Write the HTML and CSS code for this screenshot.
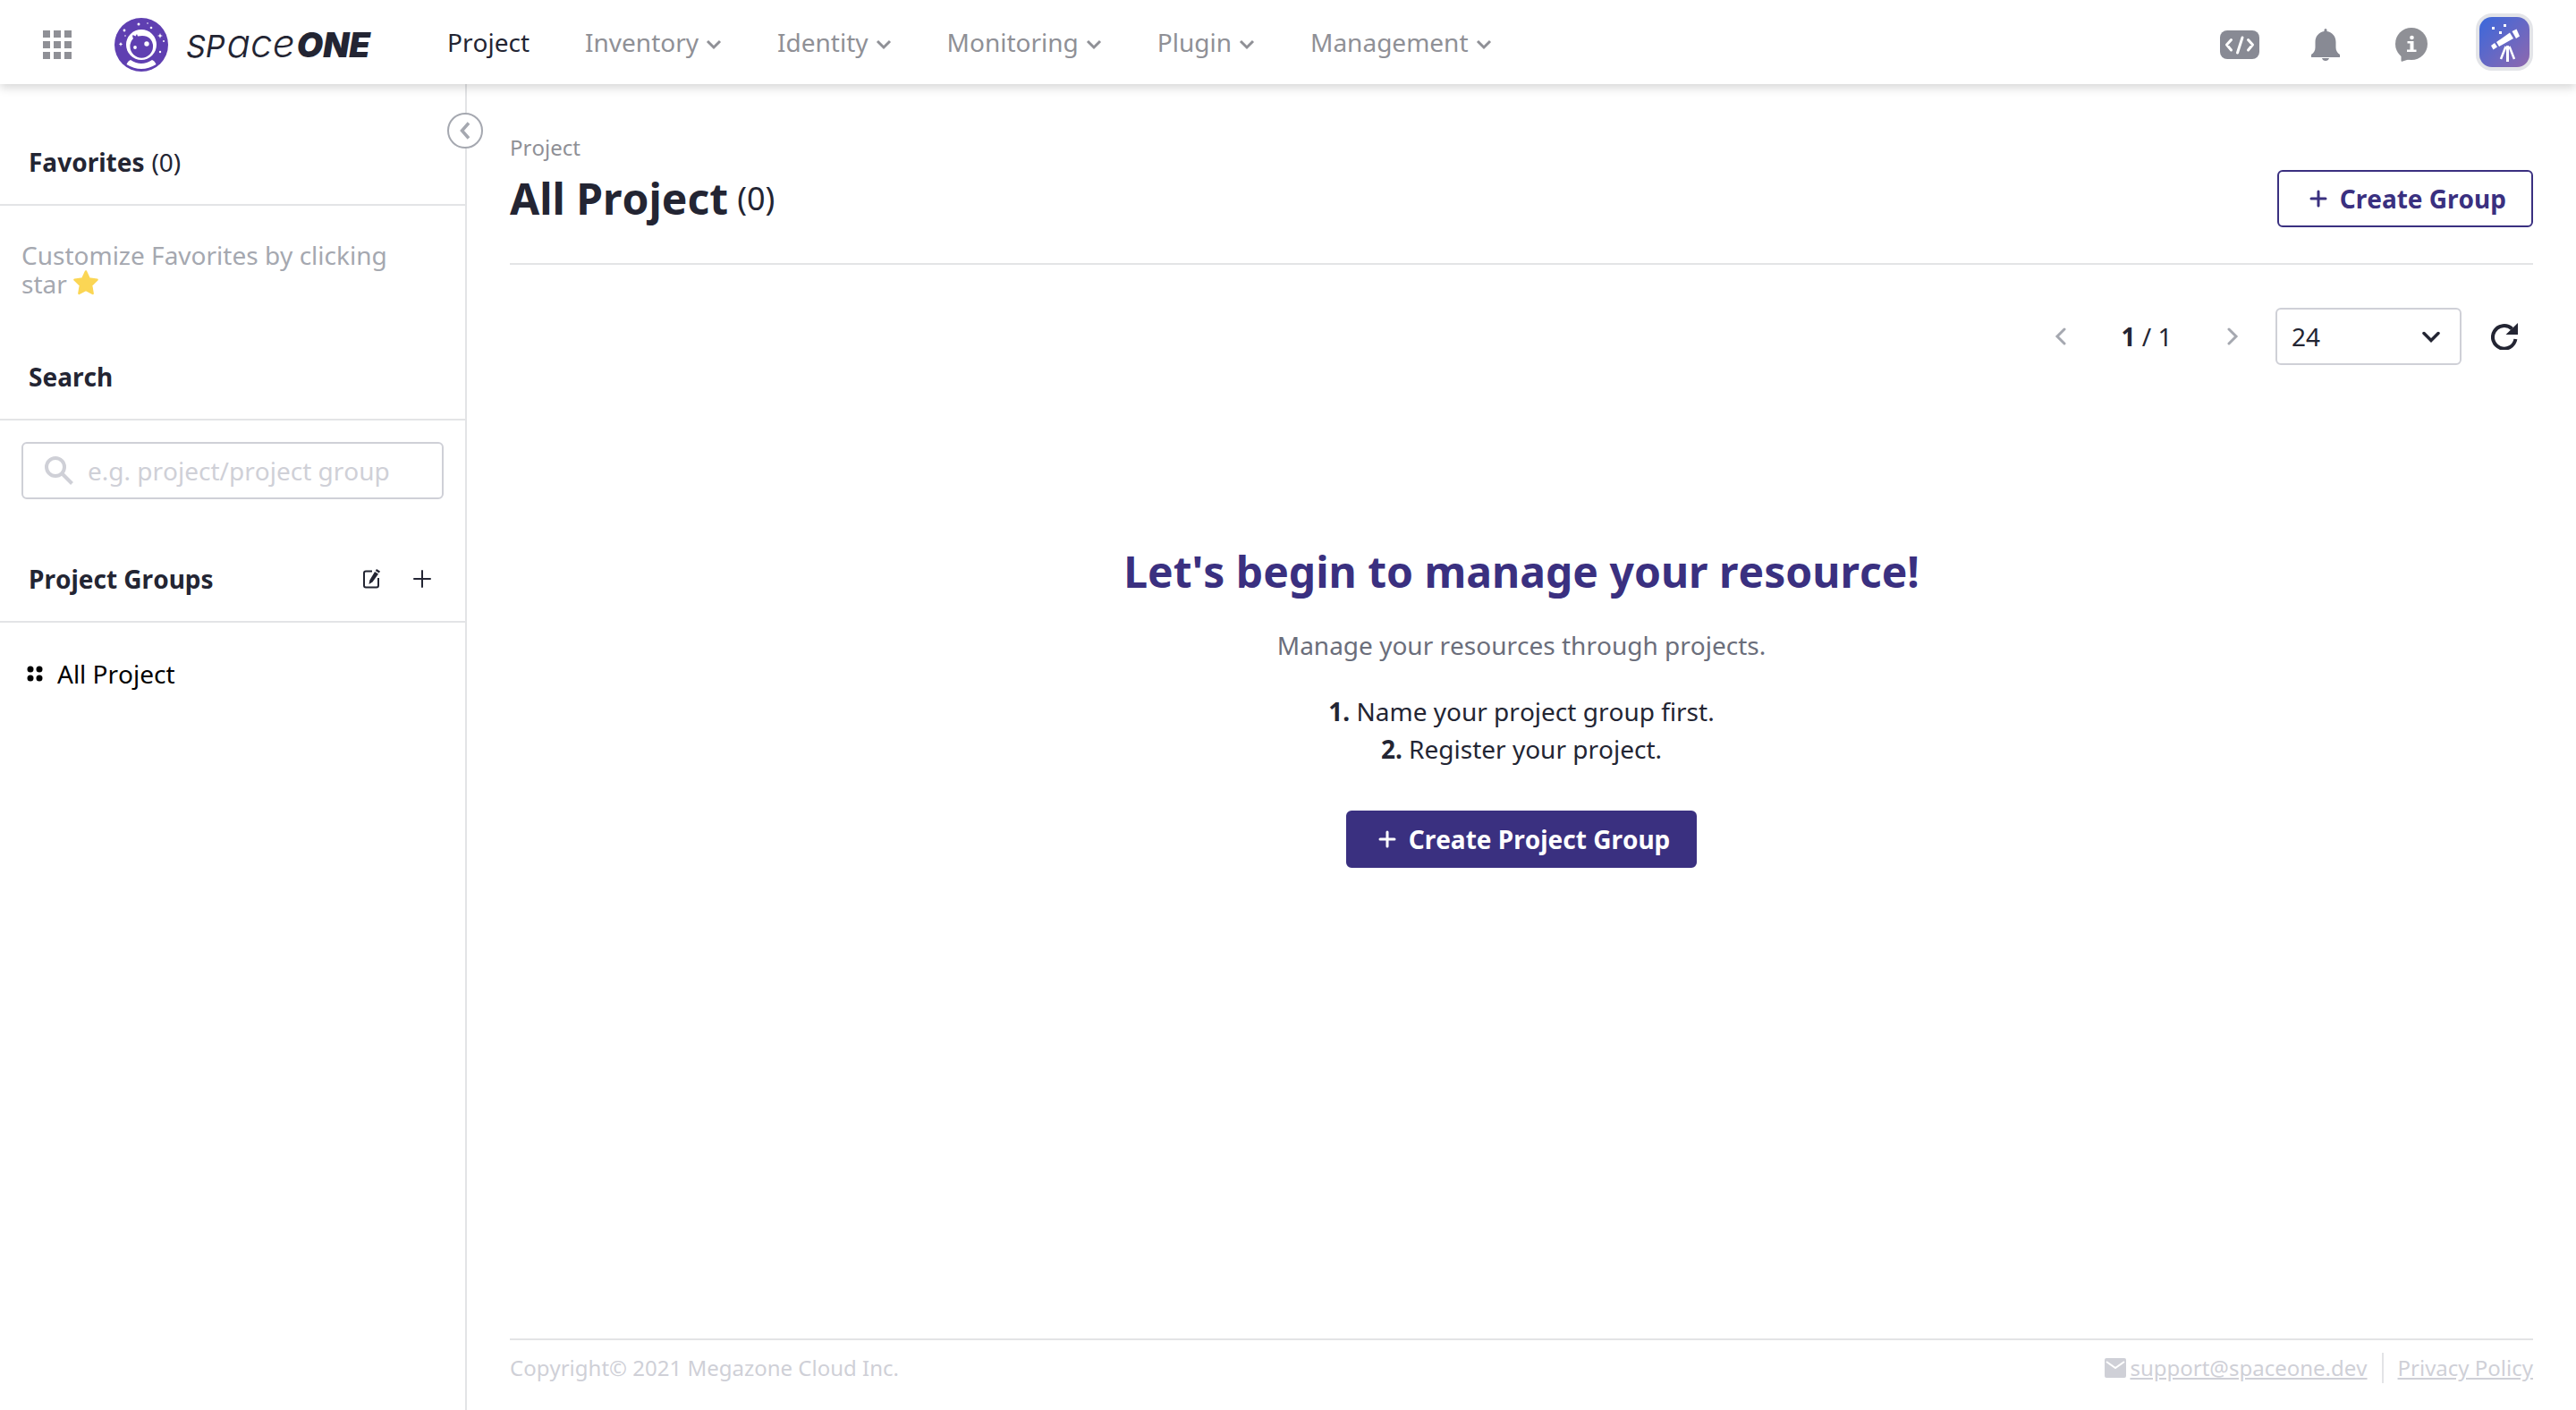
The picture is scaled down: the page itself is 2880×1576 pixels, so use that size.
FILE: index.html
```html
<!DOCTYPE html>
<html lang="en">
<head>
<meta charset="utf-8">
<meta name="viewport" content="width=device-width, initial-scale=1">
<title>Project - SpaceONE</title>
<link rel="stylesheet" href="styles.css">
</head>
<body>
<header class="topbar">
  <button class="icon-btn apps" type="button" aria-label="All services">
    <svg width="32" height="32" viewBox="0 0 32 32" fill="#8f9096"><path d="M0 0h8v8H0zM12 0h8v8h-8zM24 0h8v8h-8zM0 12h8v8H0zM12 12h8v8h-8zM24 12h8v8h-8zM0 24h8v8H0zM12 24h8v8h-8zM24 24h8v8h-8z"/></svg>
  </button>
  <a class="brand" href="#" aria-label="SpaceONE home">
    <svg width="60" height="60" viewBox="0 0 60 60">
      <circle cx="30" cy="30" r="30" fill="#5f3fb1"/>
      <circle cx="30" cy="30" r="17" fill="#fff"/>
      <path d="M21 23q-1.500-2-.5-4l3 1.500L25 18l1 2.500q9-2 13.500 2.500A12.800 12.800 0 1121 23z" fill="#5f3fb1"/>
      <path d="M18 47q12 8 24 0 3 1 4.500 5Q30 62 13.500 52q1.500-4 4.500-5z" fill="#fff"/>
      <g fill="#fff"><circle cx="36" cy="29" r="2.700"/><circle cx="23" cy="33" r="1.900"/><circle cx="27" cy="7" r="1.500"/><circle cx="41" cy="11" r="1.300"/><circle cx="11" cy="14" r="1.400"/><circle cx="37" cy="6" r=".8"/><circle cx="12" cy="20" r=".8"/><circle cx="51" cy="38" r="1.200"/><circle cx="55" cy="26" r="1"/><path d="M51 17l.8 2.200L54 20l-2.200.8L51 23l-.8-2.200L48 20l2.200-.8zM7 27l.7 1.600 1.600.7-1.600.7L7 32l-.7-2-1.600-.7 1.600-.7z"/></g>
    </svg>
    <span class="wordmark"><span class="wm-caps">SP</span><span class="wm-low">ace</span><b class="wm-one">ONE</b></span>
  </a>
  <nav class="menu" aria-label="Main">
    <a class="menu-item current" href="#">Project</a>
    <a class="menu-item" href="#">Inventory<svg class="caret" viewBox="0 0 18 12"><path d="M2 2l7 7 7-7"/></svg></a>
    <a class="menu-item" href="#">Identity<svg class="caret" viewBox="0 0 18 12"><path d="M2 2l7 7 7-7"/></svg></a>
    <a class="menu-item" href="#">Monitoring<svg class="caret" viewBox="0 0 18 12"><path d="M2 2l7 7 7-7"/></svg></a>
    <a class="menu-item" href="#">Plugin<svg class="caret" viewBox="0 0 18 12"><path d="M2 2l7 7 7-7"/></svg></a>
    <a class="menu-item" href="#">Management<svg class="caret" viewBox="0 0 18 12"><path d="M2 2l7 7 7-7"/></svg></a>
  </nav>
  <div class="tools">
    <button class="icon-btn tool" type="button" aria-label="Cloud shell">
      <svg width="44" height="32" viewBox="0 0 44 32"><rect width="44" height="32" rx="8" fill="#888a94"/><path d="M12.500 10.500L7.500 16l5 6M31.500 10.500l5 5.500-5 6M25 8l-5.500 17" fill="none" stroke="#fff" stroke-width="3" stroke-linecap="round" stroke-linejoin="round"/></svg>
    </button>
    <button class="icon-btn tool" type="button" aria-label="Notifications">
      <svg width="32" height="36" viewBox="0 0 32 36" fill="#888a94"><path d="M14.500 1.500a1.500 1.500 0 013 0V3C24 4 27.500 9 27.500 15v6c0 3.500 1.500 6 4.500 8v3H0v-3c3-2 4.500-4.500 4.500-8v-6c0-6 3.500-11 10-12zM12 33h8c-.5 2-2 3-4 3s-3.500-1-4-3z"/></svg>
    </button>
    <button class="icon-btn tool" type="button" aria-label="Information">
      <svg width="36" height="38" viewBox="0 0 36 38"><circle cx="18" cy="18" r="18" fill="#8f9096"/><path d="M6.500 30v7q0 1 1 .8L16 35z" fill="#8f9096"/><circle cx="18.500" cy="11" r="2.300" fill="#fff"/><path d="M13.500 15h7v9.500h3V27H13v-2.500h3.500v-7h-3z" fill="#fff"/></svg>
    </button>
    <button class="icon-btn avatar" type="button" aria-label="My account">
      <svg width="56" height="56" viewBox="0 0 56 56"><defs><linearGradient id="sky" x1="0" y1="0" x2="1" y2="1"><stop offset="0" stop-color="#3a68dc"/><stop offset="1" stop-color="#8f68ae"/></linearGradient></defs><rect width="56" height="56" rx="14" fill="url(#sky)"/>
      <g fill="#fff"><path d="M14 11h3v3h-3zM27 8h3v3h-3zM22 16h3v3h-3zM36.500 16l5-2.500 3.500 8-4 2.500zM19 28l15-10.500 4 6.500-16 9zM13 32l4-3 3 4.500-4.500 3zM30 32h3v18h-3z"/></g><path d="M29.500 33L24 47M33.500 33L39 47" stroke="#fff" stroke-width="2.500"/></svg>
    </button>
  </div>
</header>
<div class="page">
  <aside class="sidebar">
    <button class="collapse" type="button" aria-label="Collapse sidebar"><svg width="12" height="20" viewBox="0 0 12 20"><path d="M10 1.500L2.500 10l7.500 8.500" fill="none" stroke="#a5a8b0" stroke-width="3.500"/></svg></button>
    <section>
      <h2 class="side-title">Favorites <span class="side-count">(0)</span></h2>
      <p class="hint">Customize Favorites by clicking star <svg class="star" viewBox="0 0 28 28"><path d="M14 1.500l3.700 8 8.800 1.200-6.400 6.200 1.500 9.100-7.600-4.200L6.400 26l1.500-9.100-6.400-6.200 8.800-1.200z" fill="#fbd654" stroke="#fbd654" stroke-width="2.500" stroke-linejoin="round"/></svg></p>
    </section>
    <section>
      <h2 class="side-title"><label for="search">Search</label></h2>
      <div class="search">
        <svg width="32" height="32" viewBox="0 0 32 32" fill="none" stroke="#cfd0d7" stroke-width="4"><circle cx="12" cy="12" r="10"/><path d="M19 19l11.500 11.500"/></svg>
        <input id="search" class="search-input" type="text" placeholder="e.g. project/project group">
      </div>
    </section>
    <section>
      <div class="side-title">
        <h2 class="side-heading">Project Groups</h2>
        <button class="icon-btn" type="button" aria-label="Edit groups"><svg width="20" height="22" viewBox="0 0 20 22"><path d="M10 2.500H3Q1 2.500 1 4.500v14q0 2 2 2h12q2 0 2-2V10" fill="none" stroke="#232533" stroke-width="2"/><path d="M15 0l4 2.500-1.200 2-4-2.500zM13 3l4 2.500-6.500 9-4 2.500.8-4.500z" fill="#232533"/></svg></button>
        <button class="icon-btn" type="button" aria-label="Add group"><svg width="20" height="20" viewBox="0 0 20 20"><path d="M10 1v18M1 10h18" stroke="#232533" stroke-width="2" stroke-linecap="round"/></svg></button>
      </div>
      <a class="tree-item" href="#"><svg width="18" height="18" viewBox="0 0 18 18"><circle cx="4" cy="4" r="3.500"/><circle cx="14" cy="4" r="3.500"/><circle cx="4" cy="14" r="3.500"/><circle cx="14" cy="14" r="3.500"/></svg>All Project</a>
    </section>
  </aside>
  <main class="content">
    <a class="crumb" href="#">Project</a>
    <div class="title-row">
      <h1 class="title">All Project</h1>
      <span class="title-count">(0)</span>
      <button class="btn outline" type="button"><svg width="20" height="20" viewBox="0 0 20 20"><path d="M10 2v16M2 10h16"/></svg>Create Group</button>
    </div>
    <div class="toolbar">
      <button class="square" type="button" aria-label="Previous page" disabled><svg width="14" height="20" viewBox="0 0 14 20"><path d="M11 2l-8 8 8 8" fill="none" stroke="#a5a8b0" stroke-width="3" stroke-linecap="round"/></svg></button>
      <span class="pages"><b>1</b> / 1</span>
      <button class="square" type="button" aria-label="Next page" disabled><svg width="14" height="20" viewBox="0 0 14 20"><path d="M3 2l8 8-8 8" fill="none" stroke="#a5a8b0" stroke-width="3" stroke-linecap="round"/></svg></button>
      <div class="select-wrap">
        <select class="select" aria-label="Projects per page"><option>24</option><option>36</option><option>48</option></select>
        <svg class="select-arrow" width="20" height="14" viewBox="0 0 20 14"><path d="M2 2.500l8 8 8-8" fill="none" stroke="#232533" stroke-width="3.500" stroke-linecap="round"/></svg>
      </div>
      <button class="square" type="button" aria-label="Refresh"><svg width="30" height="30" viewBox="0 0 30 30"><path d="M23.500 6.500A12.800 12.800 0 1027.400 18" fill="none" stroke="#232533" stroke-width="4"/><path d="M30 0v13H16.500z" fill="#232533"/></svg></button>
    </div>
    <section class="empty">
      <h2 class="empty-title">Let's begin to manage your resource!</h2>
      <p class="empty-text">Manage your resources through projects.</p>
      <p class="step"><b>1.</b> Name your project group first.</p>
      <p class="step"><b>2.</b> Register your project.</p>
      <button class="btn solid" type="button"><svg width="20" height="20" viewBox="0 0 20 20"><path d="M10 2v16M2 10h16"/></svg>Create Project Group</button>
    </section>
    <footer class="footer">
      <span class="copyright">Copyright© 2021 Megazone Cloud Inc.</span>
      <a class="foot-link" href="mailto:support@spaceone.dev"><svg width="24" height="22" viewBox="0 0 24 22"><rect width="24" height="22" rx="2" fill="#cfd0d7"/><path d="M2 4l10 7 10-7" fill="none" stroke="#fff" stroke-width="2"/></svg><span class="foot-text">support@spaceone.dev</span></a>
      <a class="foot-link policy" href="#"><span class="foot-text">Privacy Policy</span></a>
    </footer>
  </main>
</div>
</body>
</html>
```
FILE: styles.css
```css
* { box-sizing: border-box; }
body {
  margin: 0;
  min-height: 100vh;
  display: flex;
  flex-direction: column;
  background: #fff;
  color: #232533;
  font: 28px/42px "Noto Sans", sans-serif;
  font-kerning: none;
}
h1, h2, p { margin: 0; }
a { color: inherit; text-decoration: none; }
button, input, select { font: inherit; font-kerning: inherit; color: inherit; }
svg { display: block; flex: none; }

.icon-btn { display: flex; align-items: center; justify-content: center; padding: 0; border: 0; background: none; }

/* Top bar */
.topbar {
  display: flex;
  align-items: center;
  height: 94px;
  padding: 0 48px;
  background: #fff;
  box-shadow: 0 4px 10px rgba(0, 0, 0, .16);
  position: relative;
  z-index: 2;
}
.apps { padding-top: 6px; }
.brand { display: flex; align-items: center; gap: 20px; width: 324px; margin-left: 48px; padding-top: 6px; }
.wordmark { display: flex; align-items: baseline; gap: 2px; font-family: Inter, sans-serif; font-style: italic; }
.wm-caps { font-size: 34px; }
.wm-low { font-size: 44px; font-weight: 300; }
.wm-one { font-size: 38px; font-weight: 900; }
.menu { display: flex; gap: 62px; margin-left: 48px; color: #8f9096; }
.menu-item { display: flex; align-items: center; gap: 8px; }
.current { color: #232533; }
.caret { width: 18px; height: 12px; margin-top: 6px; fill: none; stroke: #8f9096; stroke-width: 3; }
.tools { display: flex; align-items: center; margin-left: auto; }
.tool { width: 96px; height: 64px; padding-top: 6px; }
.avatar { width: 64px; height: 64px; margin-left: 24px; border-radius: 18px; background: #e3e4e8; }

/* Page frame */
.page { flex: 1; display: flex; }
.sidebar { position: relative; width: 522px; flex: none; border-right: 2px solid #e3e4e6; }
.collapse {
  position: absolute;
  top: 32px;
  right: -20px;
  width: 40px;
  height: 40px;
  display: flex;
  align-items: center;
  justify-content: center;
  padding: 0;
  border: 2px solid #a5a8b0;
  border-radius: 50%;
  background: #fff;
}
.side-title {
  display: flex;
  align-items: center;
  gap: 8px;
  padding: 66px 32px 26px;
  border-bottom: 2px solid #e3e4e6;
  font-size: 28px;
  font-weight: 700;
}
.side-title .icon-btn { width: 32px; margin-left: 16px; }
.side-heading { flex: 1; font-size: 28px; }
.side-count { font-weight: 400; }
.hint { padding: 39px 64px 1px 24px; line-height: 32px; color: #a5a8b0; }
.star { display: inline-block; width: 28px; height: 28px; vertical-align: -2px; }
.search {
  display: flex;
  align-items: center;
  gap: 16px;
  height: 64px;
  margin: 24px 24px 2px;
  padding: 0 24px;
  border: 2px solid #cfd0d7;
  border-radius: 6px;
}
.search-input { flex: 1; min-width: 0; padding: 0; border: 0; outline: 0; background: none; }
.search-input::placeholder { color: #cfd0d7; opacity: 1; }
.tree-item { display: flex; align-items: center; gap: 16px; padding: 36px 30px 0; color: #000; }

/* Content */
.content { flex: 1; min-width: 0; display: flex; flex-direction: column; padding: 55px 48px 0; }
.crumb { align-self: flex-start; font-size: 24px; line-height: 32px; color: #8f9096; }
.title-row { display: flex; align-items: center; gap: 10px; padding: 9px 0 40px; border-bottom: 2px solid #e3e4e6; }
.title { font-size: 48px; line-height: 64px; }
.title-count { font-size: 36px; }
.btn {
  display: flex;
  align-items: center;
  gap: 14px;
  height: 64px;
  padding: 0 28px 0 34px;
  border: 2px solid #3a3080;
  border-radius: 6px;
  font-weight: 700;
}
.btn path { stroke: currentColor; stroke-width: 3; stroke-linecap: round; }
.outline { margin-left: auto; background: #fff; color: #3a3080; }
.solid { margin-top: 48px; background: #3a3080; color: #fff; }

.toolbar { display: flex; align-items: center; justify-content: flex-end; margin-top: 48px; }
.square { width: 64px; height: 64px; display: flex; align-items: center; justify-content: center; padding: 0; border: 0; background: none; }
.pages { min-width: 128px; text-align: center; }
.select-wrap { position: relative; margin: 0 16px; }
.select {
  display: block;
  width: 208px;
  height: 64px;
  padding: 0 16px;
  border: 2px solid #cfd0d7;
  border-radius: 6px;
  background: #fff;
  appearance: none;
}
.select-arrow { position: absolute; top: 26px; right: 24px; pointer-events: none; }

.empty { display: flex; flex-direction: column; align-items: center; padding: 198px 0 96px; }
.empty-title { font-size: 48px; line-height: 66px; color: #3a3080; }
.empty-text { margin: 28px 0 32px; color: #6b6e7b; }

.footer {
  display: flex;
  align-items: center;
  margin-top: auto;
  padding: 14px 0 30px;
  border-top: 2px solid #e3e4e6;
  font-size: 24px;
  line-height: 34px;
  color: #cfd0d7;
}
.copyright { flex: 1; }
.foot-link { display: flex; align-items: center; gap: 4px; }
.foot-text { text-decoration: underline; }
.policy { margin-left: 16px; padding-left: 16px; border-left: 2px solid #e3e4e6; }
```
